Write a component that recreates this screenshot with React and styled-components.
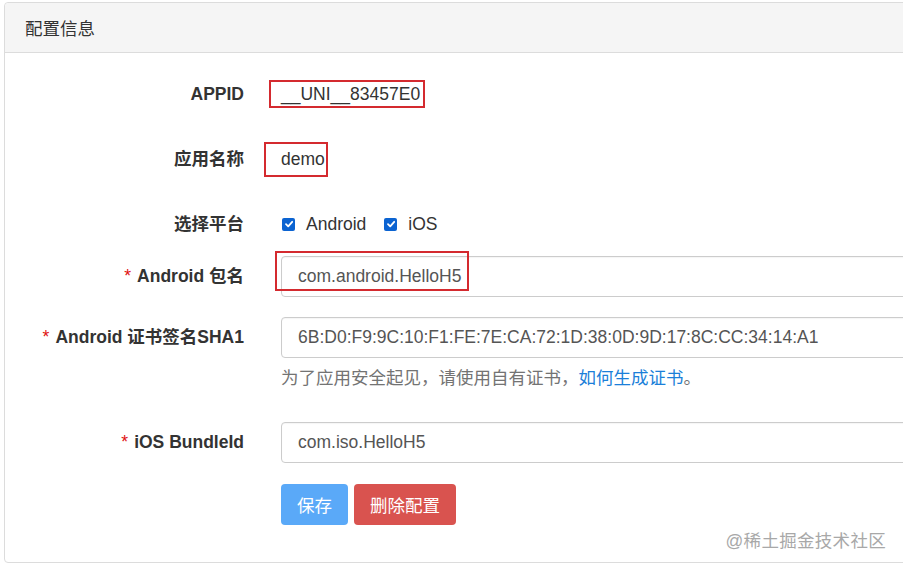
import styled, { createGlobalStyle } from "styled-components";

const GlobalStyle = createGlobalStyle`
  html, body {
    margin: 0;
    padding: 0;
    background: #fff;
    overflow: hidden;
  }
  body {
    font-family: "Liberation Sans", Arial, "Noto Sans CJK SC", sans-serif;
    color: #333;
  }
`;

const Page = styled.div`
  width: 903px;
  height: 568px;
  position: relative;
  overflow: hidden;
  padding: 2px 0 0 4px;
  box-sizing: border-box;
`;

const Panel = styled.section`
  width: 940px;
  height: 561px;
  box-sizing: border-box;
  border: 1px solid #dcdcdc;
  border-radius: 4px;
  background: #fff;
  display: flex;
  flex-direction: column;
`;

const PanelHeading = styled.header`
  height: 49px;
  display: flex;
  align-items: center;
  padding-left: 20px;
  background: #f5f5f5;
  border-bottom: 1px solid #dcdcdc;
  border-radius: 4px 4px 0 0;
  font-size: 17.5px;
  color: #333;
`;

const PanelBody = styled.div`
  padding-top: 21px;
  display: flex;
  flex-direction: column;
`;

const Row = styled.div`
  display: grid;
  grid-template-columns: 239px 1fr;
  column-gap: 37px;
  align-items: start;
  margin-bottom: ${(p) => p.gap || 0}px;
`;

const Label = styled.label`
  text-align: right;
  font-weight: bold;
  font-size: 17.5px;
  line-height: ${(p) => p.lh || 40}px;
  color: #333;
  white-space: nowrap;
`;

const Star = styled.span`
  color: #e01010;
  font-weight: normal;
  margin-right: 6px;
`;

const Control = styled.div`
  position: relative;
  display: flex;
  flex-direction: column;
`;

const StaticText = styled.div`
  font-size: 17.5px;
  line-height: 40px;
  color: #333;
`;

const Mark = styled.div`
  position: absolute;
  border: 2px solid #d42a2f;
  box-sizing: border-box;
  pointer-events: none;
`;

const Checks = styled.div`
  display: flex;
  align-items: center;
  height: 40px;
  padding-left: 1px;
  gap: 18px;
`;

const CheckItem = styled.span`
  display: inline-flex;
  align-items: center;
  gap: 11px;
  font-size: 17.5px;
  color: #333;
`;

const Box = styled.span`
  width: 13px;
  height: 13px;
  border-radius: 2px;
  background: #0b63d1;
  display: inline-flex;
  align-items: center;
  justify-content: center;
`;

const Input = styled.div`
  height: 41px;
  box-sizing: border-box;
  border: 1px solid #ccc;
  border-radius: 4px;
  padding: 0 16px;
  display: flex;
  align-items: center;
  font-size: 17.5px;
  color: #555;
  background: #fff;
  box-shadow: inset 0 1px 1px rgba(0, 0, 0, 0.04);
`;

const Help = styled.p`
  margin: 8px 0 0;
  font-size: 17.5px;
  line-height: 24px;
  color: #737373;
`;

const HelpLink = styled.a`
  color: #1b7fd9;
  text-decoration: none;
`;

const Buttons = styled.div`
  display: flex;
  gap: 6px;
`;

const Button = styled.button`
  height: 41px;
  padding: 0 ${(p) => p.px || 16}px;
  border: none;
  border-radius: 4px;
  font-family: inherit;
  font-size: 17.5px;
  color: #fff;
  background: ${(p) => (p.danger ? "#d9534f" : "#5aa9f8")};
`;

const Watermark = styled.div`
  position: absolute;
  right: 17px;
  bottom: 16px;
  font-size: 17.5px;
  color: #a8a8a8;
  letter-spacing: 0.3px;
`;

function Check({ label }) {
  return (
    <CheckItem>
      <Box>
        <svg width="10" height="10" viewBox="0 0 10 10">
          <path d="M2 5.2 L4.2 7.3 L8.2 2.8" fill="none" stroke="#fff" strokeWidth="1.8" strokeLinecap="round" strokeLinejoin="round" />
        </svg>
      </Box>
      {label}
    </CheckItem>
  );
}

export default function App() {
  return (
    <>
      <GlobalStyle />
      <Page>
        <Panel>
          <PanelHeading>配置信息</PanelHeading>
          <PanelBody>
            <Row gap={25}>
              <Label>APPID</Label>
              <Control>
                <StaticText>__UNI__83457E0</StaticText>
                <Mark style={{ left: -12, top: 6, width: 156, height: 28 }} />
              </Control>
            </Row>
            <Row gap={25}>
              <Label>应用名称</Label>
              <Control>
                <StaticText>demo</StaticText>
                <Mark style={{ left: -17, top: 3, width: 64, height: 35 }} />
              </Control>
            </Row>
            <Row gap={12}>
              <Label>选择平台</Label>
              <Checks>
                <Check label="Android" />
                <Check label="iOS" />
              </Checks>
            </Row>
            <Row gap={20}>
              <Label lh={41}>
                <Star>*</Star>Android 包名
              </Label>
              <Control>
                <Input>com.android.HelloH5</Input>
                <Mark style={{ left: -6, top: -5, width: 194, height: 40 }} />
              </Control>
            </Row>
            <Row gap={32}>
              <Label lh={41}>
                <Star>*</Star>Android 证书签名SHA1
              </Label>
              <Control>
                <Input>6B:D0:F9:9C:10:F1:FE:7E:CA:72:1D:38:0D:9D:17:8C:CC:34:14:A1</Input>
                <Help>
                  为了应用安全起见，请使用自有证书，<HelpLink href="#">如何生成证书</HelpLink>。
                </Help>
              </Control>
            </Row>
            <Row gap={21}>
              <Label lh={41}>
                <Star>*</Star>iOS BundleId
              </Label>
              <Control>
                <Input>com.iso.HelloH5</Input>
              </Control>
            </Row>
            <Row>
              <span />
              <Buttons>
                <Button px={16}>保存</Button>
                <Button danger px={16}>删除配置</Button>
              </Buttons>
            </Row>
          </PanelBody>
        </Panel>
        <Watermark>@稀土掘金技术社区</Watermark>
      </Page>
    </>
  );
}
